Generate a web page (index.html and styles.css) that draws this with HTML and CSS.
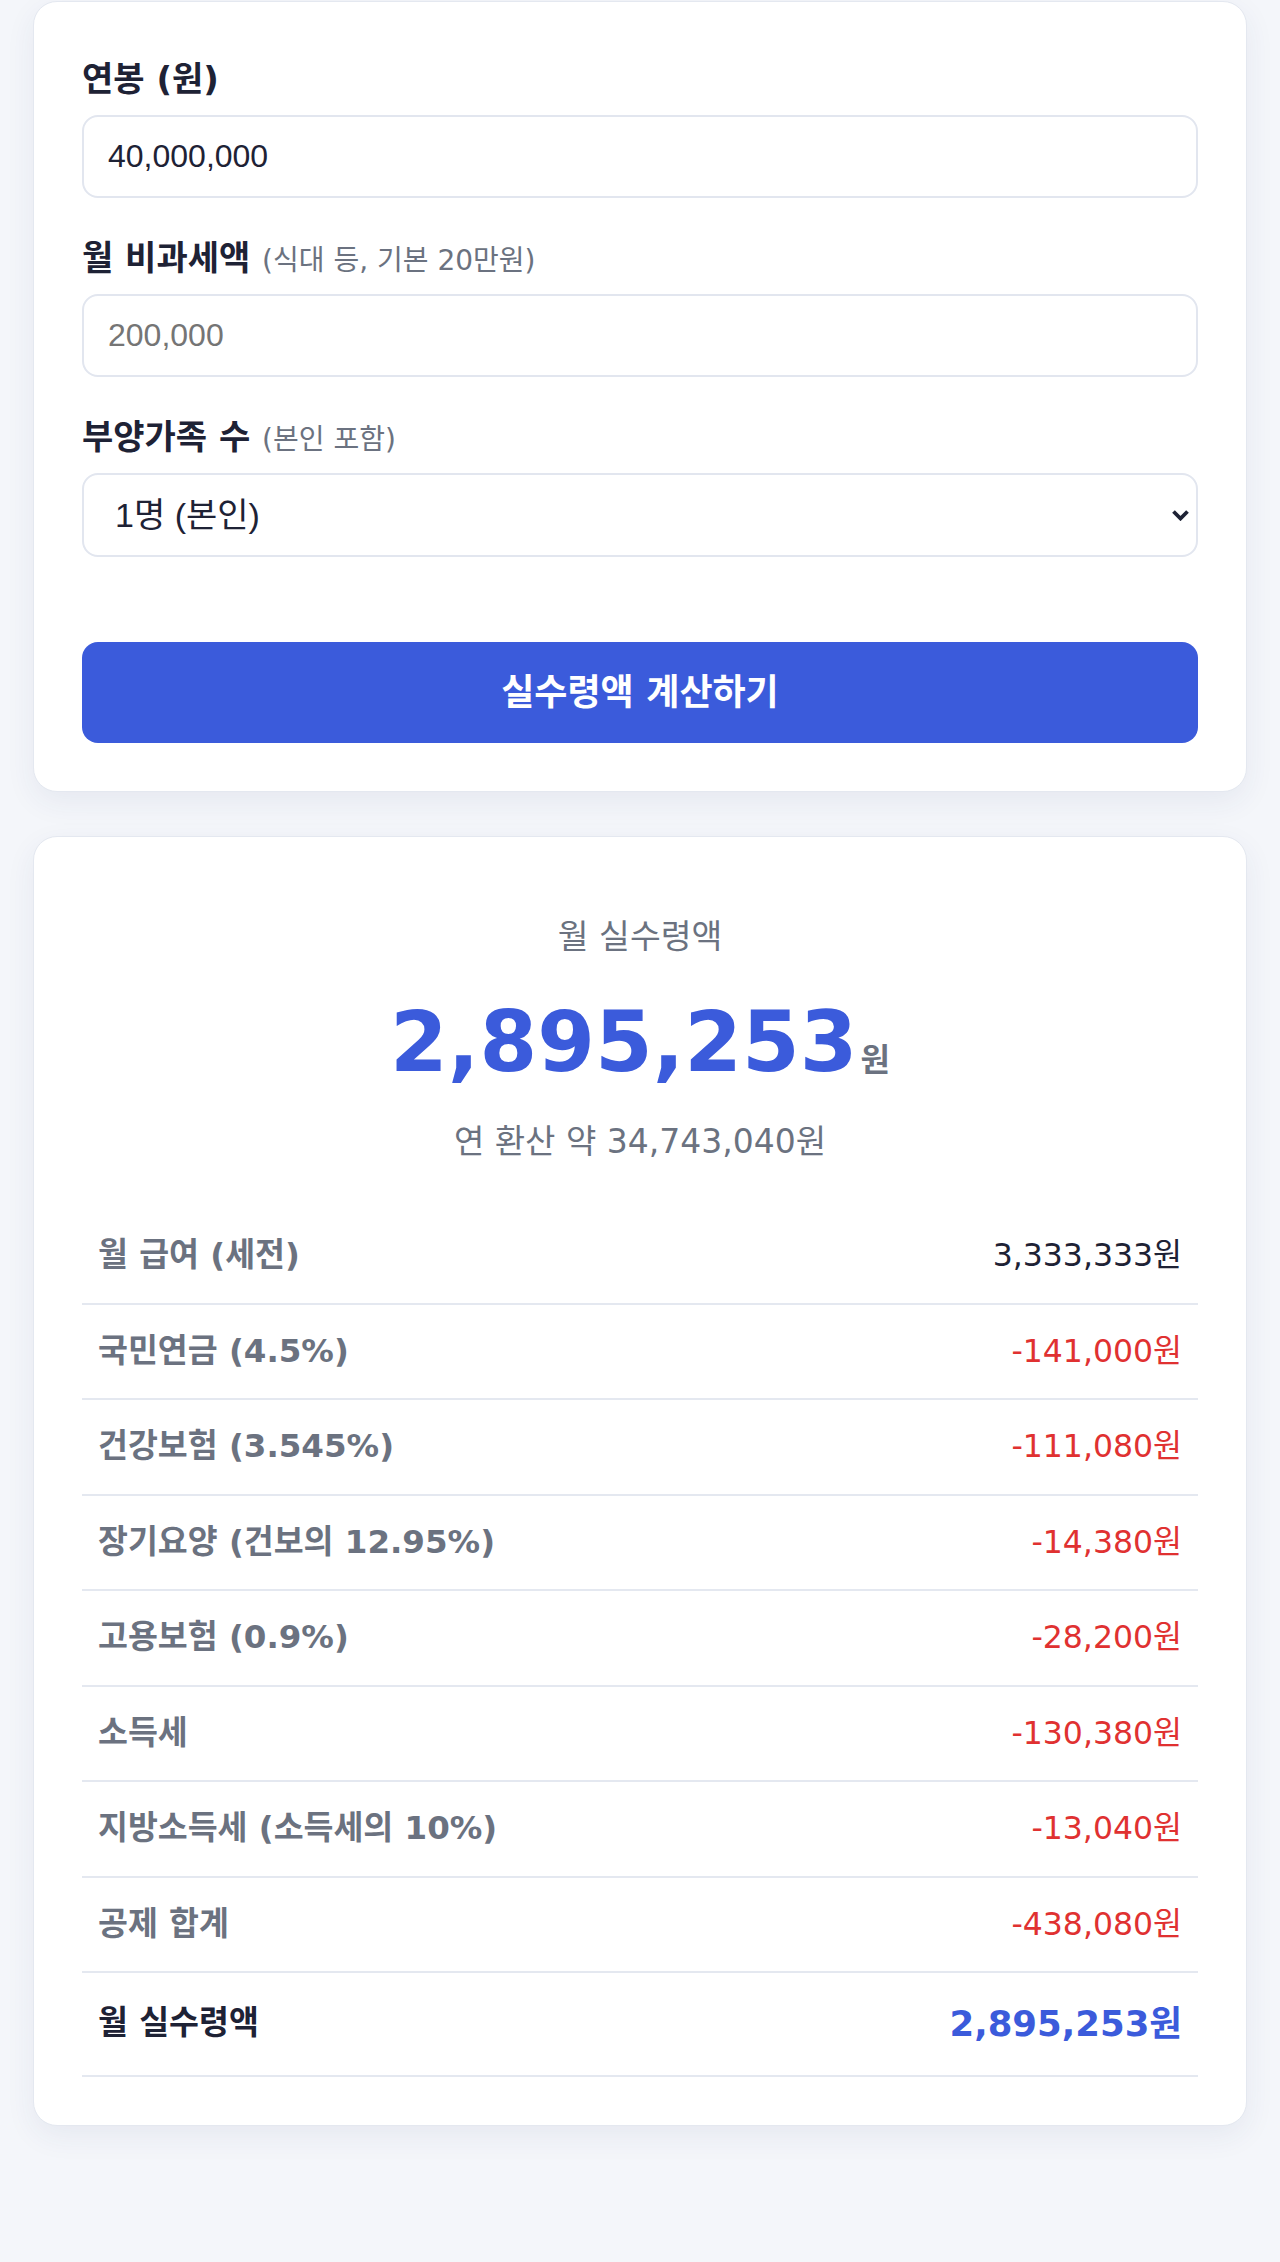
FILE: index.html
```html
<!DOCTYPE html>
<html lang="ko">
<head>
<meta charset="utf-8">
<title>연봉 실수령액 계산기</title>
<link rel="stylesheet" href="styles.css">
</head>
<body>
<main class="page">
  <section class="card form-card">
    <div class="field">
      <label class="field-label" for="salary">연봉 (원)</label>
      <input id="salary" class="text-input" type="text" value="40,000,000">
    </div>
    <div class="field">
      <label class="field-label" for="nontax">월 비과세액 <span class="hint">(식대 등, 기본 20만원)</span></label>
      <input id="nontax" class="text-input" type="text" placeholder="200,000">
    </div>
    <div class="field">
      <label class="field-label" for="family">부양가족 수 <span class="hint">(본인 포함)</span></label>
      <div class="select-wrap">
        <select id="family" class="select-input">
          <option>1명 (본인)</option>
          <option>2명</option>
          <option>3명</option>
          <option>4명</option>
          <option>5명</option>
          <option>6명 이상</option>
        </select>
        <svg class="select-arrow" viewBox="0 0 19 12" aria-hidden="true">
          <path d="M2.5 2.5 L9.5 9.5 L16.5 2.5" fill="none" stroke="#1e2235" stroke-width="3.8"/>
        </svg>
      </div>
    </div>
    <button class="calc-btn" type="button">실수령액 계산하기</button>
  </section>

  <section class="card result-card">
    <div class="summary">
      <div class="summary-label">월 실수령액</div>
      <div class="summary-amount">2,895,253<span class="unit">원</span></div>
      <div class="summary-annual">연 환산 약 34,743,040원</div>
    </div>
    <div class="breakdown">
      <div class="row"><span class="row-label">월 급여 (세전)</span><span class="row-value plain">3,333,333원</span></div>
      <div class="row"><span class="row-label">국민연금 (4.5%)</span><span class="row-value">-141,000원</span></div>
      <div class="row"><span class="row-label">건강보험 (3.545%)</span><span class="row-value">-111,080원</span></div>
      <div class="row"><span class="row-label">장기요양 (건보의 12.95%)</span><span class="row-value">-14,380원</span></div>
      <div class="row"><span class="row-label">고용보험 (0.9%)</span><span class="row-value">-28,200원</span></div>
      <div class="row"><span class="row-label">소득세</span><span class="row-value">-130,380원</span></div>
      <div class="row"><span class="row-label">지방소득세 (소득세의 10%)</span><span class="row-value">-13,040원</span></div>
      <div class="row"><span class="row-label">공제 합계</span><span class="row-value">-438,080원</span></div>
      <div class="row total"><span class="row-label">월 실수령액</span><span class="row-value">2,895,253원</span></div>
    </div>
  </section>
</main>
</body>
</html>
```

FILE: styles.css
```css
* {
  box-sizing: border-box;
}

html,
body {
  margin: 0;
  padding: 0;
  background: #f4f6fa;
}

body {
  font-family: "DejaVu Sans", "Noto Sans CJK KR", sans-serif;
  color: #1e2235;
}

.page {
  padding: 1px 33px 80px;
}

/* cards */
.card {
  background: #ffffff;
  border: 1px solid #e4e8f0;
  border-radius: 24px;
  box-shadow: 0 10px 30px rgba(40, 60, 120, 0.07);
  padding: 48px;
}

.form-card {
  padding-top: 57px;
}

.result-card {
  margin-top: 44px;
}

/* form fields */
.field {
  margin-bottom: 40px;
}

.field-label {
  display: block;
  margin-bottom: 16px;
  font-size: 34px;
  line-height: 40px;
  font-weight: 700;
  color: #1e2235;
}

.hint {
  font-size: 28px;
  line-height: 1;
  font-weight: 400;
  color: #6b7280;
}

.text-input,
.select-input {
  display: block;
  width: 100%;
  height: 83px;
  margin: 0;
  padding: 0 24px;
  border: 2px solid #e2e6ef;
  border-radius: 16px;
  background: #ffffff;
  font-family: "Liberation Sans", "Noto Sans CJK KR", sans-serif;
  font-size: 32px;
  color: #1e2235;
  outline: none;
}

.text-input::placeholder {
  color: #757575;
}

.select-wrap {
  position: relative;
}

.select-input {
  -webkit-appearance: none;
  appearance: none;
  height: 84px;
  padding-left: 31px;
  font-size: 34px;
}

.select-arrow {
  position: absolute;
  right: 8px;
  top: 50%;
  width: 19px;
  height: 12px;
  margin-top: -6px;
  pointer-events: none;
}

.calc-btn {
  display: block;
  width: 100%;
  margin-top: 85px;
  padding: 32px 0;
  border: 0;
  border-radius: 16px;
  background: #3b5bdb;
  color: #ffffff;
  font-family: inherit;
  font-size: 36px;
  line-height: 37px;
  font-weight: 700;
}

/* result summary */
.summary {
  text-align: center;
  padding: 32px 0 44px;
}

.summary-label {
  font-size: 33.5px;
  line-height: 40px;
  color: #6b7280;
}

.summary-amount {
  margin-top: 36px;
  font-size: 83px;
  line-height: 100px;
  font-weight: 700;
  color: #3b5bdb;
}

.unit {
  margin-left: 3px;
  font-size: 32px;
  line-height: 1;
  font-weight: 700;
  color: #6b7280;
}

.summary-annual {
  margin-top: 26px;
  font-size: 33px;
  line-height: 46px;
  color: #6b7280;
}

/* breakdown table */
.row {
  display: flex;
  justify-content: space-between;
  align-items: center;
  padding: 24px 16px;
  border-bottom: 2px solid #e4e8f0;
  line-height: 45.5px;
}

.row-label {
  font-size: 32.5px;
  font-weight: 700;
  color: #6b7280;
}

.row-value {
  font-size: 31.5px;
  color: #e03131;
}

.row-value.plain {
  color: #1e2235;
}

.row.total {
  padding: 28px 16px;
}

.row.total .row-label {
  color: #1e2235;
}

.row.total .row-value {
  font-size: 35.5px;
  font-weight: 700;
  color: #3b5bdb;
}
```
